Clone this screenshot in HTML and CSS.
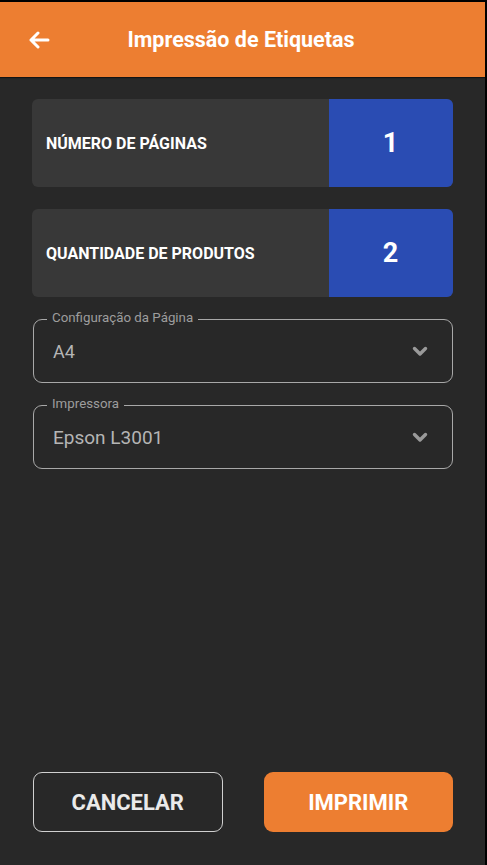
FILE: index.html
```html
<!DOCTYPE html>
<html>
<head>
    <meta charset="utf-8">
    <title>Impressão de Etiquetas</title>
    <link rel="stylesheet" href="styles.css">
</head>
<body>
    <div class="screen">
        <!-- Top bar -->
        <div class="topbar">
            <span class="back-btn">
                <svg width="22" height="18" viewBox="0 0 22 18">
                    <path d="M10 2 L3 9 L10 16 M3 9 H20" fill="none" stroke="#fff" stroke-width="3" stroke-linecap="round" stroke-linejoin="round"/>
                </svg>
            </span>
            <h1 class="topbar-title">Impressão de Etiquetas</h1>
            <span></span>
        </div>

        <div class="content">
            <!-- Counters -->
            <div class="counter">
                <div class="counter-label">NÚMERO DE PÁGINAS</div>
                <div class="counter-value">1</div>
            </div>
            <div class="counter">
                <div class="counter-label">QUANTIDADE DE PRODUTOS</div>
                <div class="counter-value">2</div>
            </div>

            <!-- Outlined selects -->
            <div class="field">
                <span class="field-label">Configuração da Página</span>
                <span class="field-value">A4</span>
                <svg class="chevron" width="16" height="11" viewBox="0 0 16 11">
                    <path d="M2.5 2.5 L8 8 L13.5 2.5" fill="none" stroke="#9a9a9a" stroke-width="3.4" stroke-linecap="round" stroke-linejoin="round"/>
                </svg>
            </div>
            <div class="field">
                <span class="field-label">Impressora</span>
                <span class="field-value large">Epson L3001</span>
                <svg class="chevron" width="16" height="11" viewBox="0 0 16 11">
                    <path d="M2.5 2.5 L8 8 L13.5 2.5" fill="none" stroke="#9a9a9a" stroke-width="3.4" stroke-linecap="round" stroke-linejoin="round"/>
                </svg>
            </div>
        </div>

        <!-- Actions -->
        <div class="actions">
            <button class="btn btn-outline">CANCELAR</button>
            <button class="btn btn-primary">IMPRIMIR</button>
        </div>
    </div>
</body>
</html>
```

FILE: styles.css
```css
/* Reset */
* {
    margin: 0;
    padding: 0;
    box-sizing: border-box;
}

body {
    background-color: #000;
    font-family: Roboto, "Liberation Sans", Arial, sans-serif;
}

/* Phone screen */
.screen {
    margin: 2px 2px 0 0;
    height: 863px;
    background-color: #282828;
    display: flex;
    flex-direction: column;
}

/* Top bar */
.topbar {
    height: 75px;
    background-color: #ed7e31;
    display: grid;
    grid-template-columns: 80px 1fr 80px;
    align-items: center;
    box-shadow: 0 1px 1px rgba(0, 0, 0, 0.5);
}

.back-btn {
    padding-left: 28px;
    display: flex;
    padding-top: 1px;
}

.topbar-title {
    text-align: center;
    color: #fff;
    font-size: 21.5px;
    font-weight: 700;
    padding-right: 3px;
}

.content {
    flex: 1;
    padding: 22px 32px 0 32px;
    display: flex;
    flex-direction: column;
    gap: 22px;
}

/* Counter cards */
.counter {
    height: 88px;
    display: flex;
    border-radius: 6px;
    overflow: hidden;
    background-color: #383838;
}

.counter-label {
    flex: 1;
    display: flex;
    align-items: center;
    padding-left: 14px;
    color: #fff;
    font-size: 16px;
    font-weight: 700;
}

.counter-value {
    width: 124px;
    background-color: #2a4cb3;
    color: #fff;
    font-size: 27px;
    font-weight: 700;
    display: flex;
    align-items: center;
    justify-content: center;
    padding-right: 1px;
}

/* Outlined select fields */
.field {
    position: relative;
    height: 64px;
    margin-left: 1px;
    border: 1.5px solid #a8a8a8;
    border-radius: 9px;
    display: flex;
    align-items: center;
    padding: 0 24px 0 19px;
}

.field-label {
    position: absolute;
    top: -10px;
    left: 13px;
    padding: 0 5px;
    background-color: #282828;
    color: #9d9d9d;
    font-size: 13.3px;
    line-height: 16px;
}

.field-value {
    flex: 1;
    color: #b5b5b5;
    font-size: 18px;
}

.field-value.large {
    font-size: 19px;
}

.chevron {
    display: block;
}

/* Bottom buttons */
.actions {
    display: grid;
    grid-template-columns: 1fr 1fr;
    gap: 41px;
    padding: 0 32px 33px 33px;
}

.btn {
    height: 60px;
    border-radius: 9px;
    font-family: Roboto, "Liberation Sans", Arial, sans-serif;
    font-size: 22px;
    font-weight: 700;
    cursor: pointer;
}

.btn-outline {
    background-color: transparent;
    border: 1.5px solid #d0d0d0;
    color: #eaeaea;
}

.btn-primary {
    background-color: #ed7e31;
    border: none;
    color: #fff;
}
```
